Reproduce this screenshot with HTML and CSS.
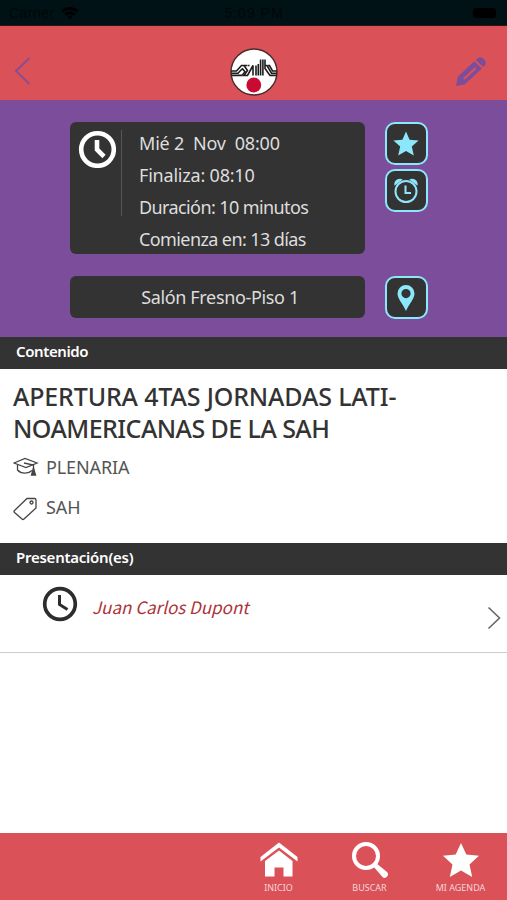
FILE: index.html
```html
<!DOCTYPE html>
<html lang="es">
<head>
    <meta charset="UTF-8">
    <meta name="viewport" content="width=device-width, initial-scale=1.0">
    <title>Agenda</title>
    <link rel="stylesheet" href="styles.css">
</head>
<body>
    <div class="status-bar">
        <div class="carrier">
            <span>Carrier</span>
            <svg width="18" height="14" viewBox="0 0 18 14"><path d="M0 4.500a13 13 0 0 1 18 0l-2 2a10 10 0 0 0-14 0zM3.200 7.700a8.300 8.300 0 0 1 11.600 0l-2 2a5.500 5.500 0 0 0-7.600 0zM6.300 10.700a4 4 0 0 1 5.400 0L9 13.500z"/></svg>
        </div>
        <span class="time">5:09 PM</span>
        <span class="battery"></span>
    </div>

    <header class="navbar">
        <svg class="back" width="18" height="28" viewBox="0 0 18 28"><path d="M15.500 1 2 14l13.500 13"/></svg>
        <svg class="logo" width="48" height="48" viewBox="0 0 48 48">
            <circle cx="24" cy="24" r="23" fill="#fff" stroke="#4b2b2d" stroke-width="1.400"/>
            <g fill="none" stroke="#1c1c1c" stroke-width="1.600">
                <path d="M1 23h5.500l5-5.500H17M1 25.200h7l4-4.200M1.500 27.400h10.500l3-3.600-3-3.400"/>
                <path d="m14 17.500 3.500 5-3.500 5h3.500l5.500-10v10M17.500 17.500h2"/>
                <path d="M26 27.500v-10M28.300 27.500V16M30.600 27.500V11.500M32.900 27.500V11.500M35 11.500v9l5 6.900h6.500M35 17.500h2l4.500 7.700H47M38 17.500h1.500L42.500 23H47"/>
            </g>
            <circle cx="23.800" cy="37" r="7.400" fill="#c90a32"/>
        </svg>
        <svg class="edit" width="32" height="32" viewBox="0 0 32 32">
            <path fill-rule="evenodd" d="m1 30 2-9.500L19.300 5.200l7.500 7.300L10 28.300zM8 22.200l1.500 1.500L21.500 12.800 20 11.300z"/>
            <path d="m20.800 4 2.500-2.200c3.500-2.500 9.200 3.300 6.900 6.900L28.200 11z"/>
        </svg>
    </header>

    <section class="summary">
        <div class="row">
            <div class="card schedule">
                <svg class="clock" width="38" height="38" viewBox="0 0 38 38"><circle cx="19.500" cy="19.500" r="16.300" stroke-width="4.600"/><path d="M19 10v9.500l7 7" stroke-width="4.600"/></svg>
                <ul class="times">
                    <li class="wide">Mié 2&nbsp; Nov&nbsp; 08:00</li>
                    <li class="wide">Finaliza: 08:10</li>
                    <li>Duración: 10 minutos</li>
                    <li>Comienza en: 13 días</li>
                </ul>
            </div>
            <div class="actions">
                <button class="action"><svg width="26" height="26" viewBox="0 0 26 26"><path class="solid" d="m13 .500 3.600 8.300 9 .8-6.800 6 2 8.900L13 20l-7.800 4.500 2-8.900-6.800-6 9-.8z"/></svg></button>
                <button class="action"><svg width="26" height="28" viewBox="0 0 26 28"><path class="solid" d="M1.500 8.800C.5 4 5 .3 9.800 2.500zM24.500 8.800C25.500 4 21 .3 16.200 2.500z"/><circle cx="13" cy="14.500" r="10.500"/><path d="M12.500 8.500v7.500H18"/></svg></button>
            </div>
        </div>
        <div class="row">
            <div class="card place"><span>Salón Fresno-Piso 1</span></div>
            <button class="action"><svg width="18" height="26" viewBox="0 0 18 26"><path class="solid" fill-rule="evenodd" d="M9 0a8.500 8.500 0 0 1 8.500 8.500C17.500 14 12 19 9 26 6 19 .5 14 .5 8.500A8.500 8.500 0 0 1 9 0zm0 4a4.600 4.600 0 1 0 0 9.200A4.600 4.600 0 0 0 9 4z"/></svg></button>
        </div>
    </section>

    <h2 class="bar">Contenido</h2>
    <section class="content">
        <h1>APERTURA 4TAS JORNADAS LATI-<br><span class="tight">NOAMERICANAS DE LA SAH</span></h1>
        <p class="tag plenary">
            <svg width="26" height="20" viewBox="0 0 26 20"><path d="M1 6 12 1.500 24 6l-11 4.500zM4.500 8v5c3.500 4 11 4 14.500.5M11 6l9.500 2v6"/><path class="tassel" d="m20.500 11-2 7h4z"/></svg>
            <span>PLENARIA</span>
        </p>
        <p class="tag society">
            <svg width="26" height="24" viewBox="0 0 26 24"><path d="M14 1.500h7.500q1.500 0 1.500 1.500v8L11 22q-1 1-2 0L1.500 15.500q-1-1 0-2z"/><circle cx="18.500" cy="5.500" r="1.500"/></svg>
            <span>SAH</span>
        </p>
    </section>

    <h2 class="bar second">Presentación(es)</h2>
    <section class="talk">
        <svg class="clock" width="36" height="36" viewBox="0 0 36 36"><circle cx="18" cy="18" r="15.300" stroke-width="3.700"/><path d="M17.500 9v9.500l8 5" stroke-width="3"/></svg>
        <span class="speaker">Juan Carlos Dupont</span>
        <svg class="next" width="14" height="24" viewBox="0 0 14 24"><path d="m1.500 1.500 11 10.500-11 10.500"/></svg>
    </section>

    <footer class="tabs">
        <a class="tab">
            <svg width="38" height="36" viewBox="0 0 38 36"><path d="M19 .500 37.500 15v4.500L19 5.500.5 19.500V15z"/><path d="M19 8.500 32.500 19v15.500H23.500v-9h-9v9H5V19z"/></svg>
            <span>INICIO</span>
        </a>
        <a class="tab">
            <svg width="38" height="38" viewBox="0 0 38 38"><circle cx="15" cy="15" r="12" fill="none" stroke="#fff" stroke-width="4"/><path d="m22 25 3-3 11 9c3 3-1.500 8-4.500 5z"/></svg>
            <span>BUSCAR</span>
        </a>
        <a class="tab">
            <svg width="36" height="34" viewBox="0 0 36 34"><path d="m18 0 5.300 11.500L36 12.800l-9.500 8.600L29.200 34 18 27.500 6.800 34l2.700-12.600L0 12.800l12.700-1.300z"/></svg>
            <span>MI AGENDA</span>
        </a>
    </footer>
</body>
</html>
```
FILE: styles.css
```css
* {
    box-sizing: border-box;
}
body {
    margin: 0;
    height: 900px;
    display: flex;
    flex-direction: column;
    font-family: 'Noto Sans', 'Open Sans', sans-serif;
    background-color: #fff;
    color: #333;
    overflow: hidden;
}
h1, h2, p, ul {
    margin: 0;
    padding: 0;
}
svg {
    display: block;
    flex: none;
}
.status-bar {
    height: 26px;
    padding: 0 11px 0 9px;
    display: grid;
    grid-template-columns: 1fr auto 1fr;
    align-items: center;
    background-color: #001216;
    color: #000709;
    border-bottom: 1px solid #31141a;
    font: 14px 'Liberation Sans', sans-serif;
}
.carrier {
    display: flex;
    align-items: center;
    gap: 6px;
    letter-spacing: 0.4px;
}
.time {
    padding-left: 3px;
    letter-spacing: 1px;
}
.battery {
    justify-self: end;
    width: 23px;
    height: 10px;
    border-radius: 3px;
    background-color: #000;
}

.navbar {
    height: 74px;
    padding: 0 20px 0 14px;
    display: grid;
    grid-template-columns: 1fr auto 1fr;
    align-items: center;
    background-color: #da5158;
}
.back {
    margin-top: 16px;
    fill: none;
    stroke: #8b4c91;
    stroke-width: 2;
}
.logo {
    margin: 18px 0 0 6px;
}
.edit {
    justify-self: end;
    margin-top: 18px;
    fill: #7c4d9b;
}

.summary {
    height: 237px;
    padding: 22px 79px 0 70px;
    display: flex;
    flex-direction: column;
    gap: 22px;
    background-color: #7c4d9b;
}
.row {
    display: flex;
    justify-content: space-between;
}
.card {
    width: 295px;
    border-radius: 6px;
    background-color: #333;
    color: #ddd;
    font-size: 18px;
}
.schedule {
    height: 132px;
    padding: 8px 8px;
    display: flex;
}
.clock {
    fill: none;
    stroke: #fff;
}
.times {
    height: 86px;
    margin-left: 5px;
    padding-left: 17px;
    border-left: 1px solid #555;
    list-style: none;
    letter-spacing: -0.6px;
    line-height: 32px;
}
.times li {
    position: relative;
    top: -3px;
    white-space: nowrap;
}
.times .wide {
    letter-spacing: -0.2px;
}
.place {
    height: 42px;
    padding-left: 5px;
    letter-spacing: -0.35px;
    line-height: 43px;
    text-align: center;
}
.actions {
    display: flex;
    flex-direction: column;
    gap: 4px;
}
.action {
    width: 43px;
    height: 43px;
    padding: 0 1px 0 0;
    display: flex;
    align-items: center;
    justify-content: center;
    border: 2px solid #8de7fa;
    border-radius: 10px;
    background-color: #333;
    fill: none;
    stroke: #8de7fa;
    stroke-width: 2;
}
.solid {
    fill: #8de7fa;
    stroke: none;
}

.bar {
    height: 32px;
    padding-left: 16px;
    background-color: #333;
    color: #fff;
    font-size: 15px;
    font-weight: 600;
    letter-spacing: -0.4px;
    line-height: 28px;
}
.second {
    letter-spacing: -0.25px;
}
.content {
    height: 174px;
    padding: 11px 13px 0;
}
.content h1 {
    font-size: 25px;
    font-weight: 500;
    letter-spacing: -0.15px;
    line-height: 32px;
    white-space: nowrap;
}
.content .tight {
    letter-spacing: -0.55px;
}
.tag {
    height: 40px;
    display: flex;
    align-items: center;
    gap: 7px;
    color: #555;
    font-size: 18px;
    letter-spacing: -0.1px;
}
.tag svg {
    fill: none;
    stroke: #444;
    stroke-width: 1.3;
}
.tag .tassel {
    fill: #444;
}
.plenary {
    margin-top: 3px;
}
.society svg {
    margin-top: 3px;
}
.talk {
    height: 78px;
    padding: 11px 6px 0 42px;
    display: flex;
    border-bottom: 1px solid #ccc;
}
.talk .clock {
    stroke: #2b2d2e;
}
.speaker {
    margin-left: 14px;
    color: #ad3339;
    font-family: 'Noto Sans CJK SC', sans-serif;
    font-size: 17px;
    font-style: italic;
    line-height: 42px;
}
.next {
    margin: 20px 0 0 auto;
    fill: none;
    stroke: #666;
    stroke-width: 1.6;
}

.tabs {
    height: 67px;
    margin-top: auto;
    padding: 5px 1px 0 0;
    display: flex;
    justify-content: flex-end;
    background-color: #da5158;
}
.tab {
    width: 91px;
    display: flex;
    flex-direction: column;
    align-items: center;
    justify-content: space-between;
    padding-bottom: 5px;
    fill: #fff;
    color: #f6d5d6;
    font-size: 9px;
    line-height: 14px;
}
.tab svg {
    margin: auto 0;
}
```
